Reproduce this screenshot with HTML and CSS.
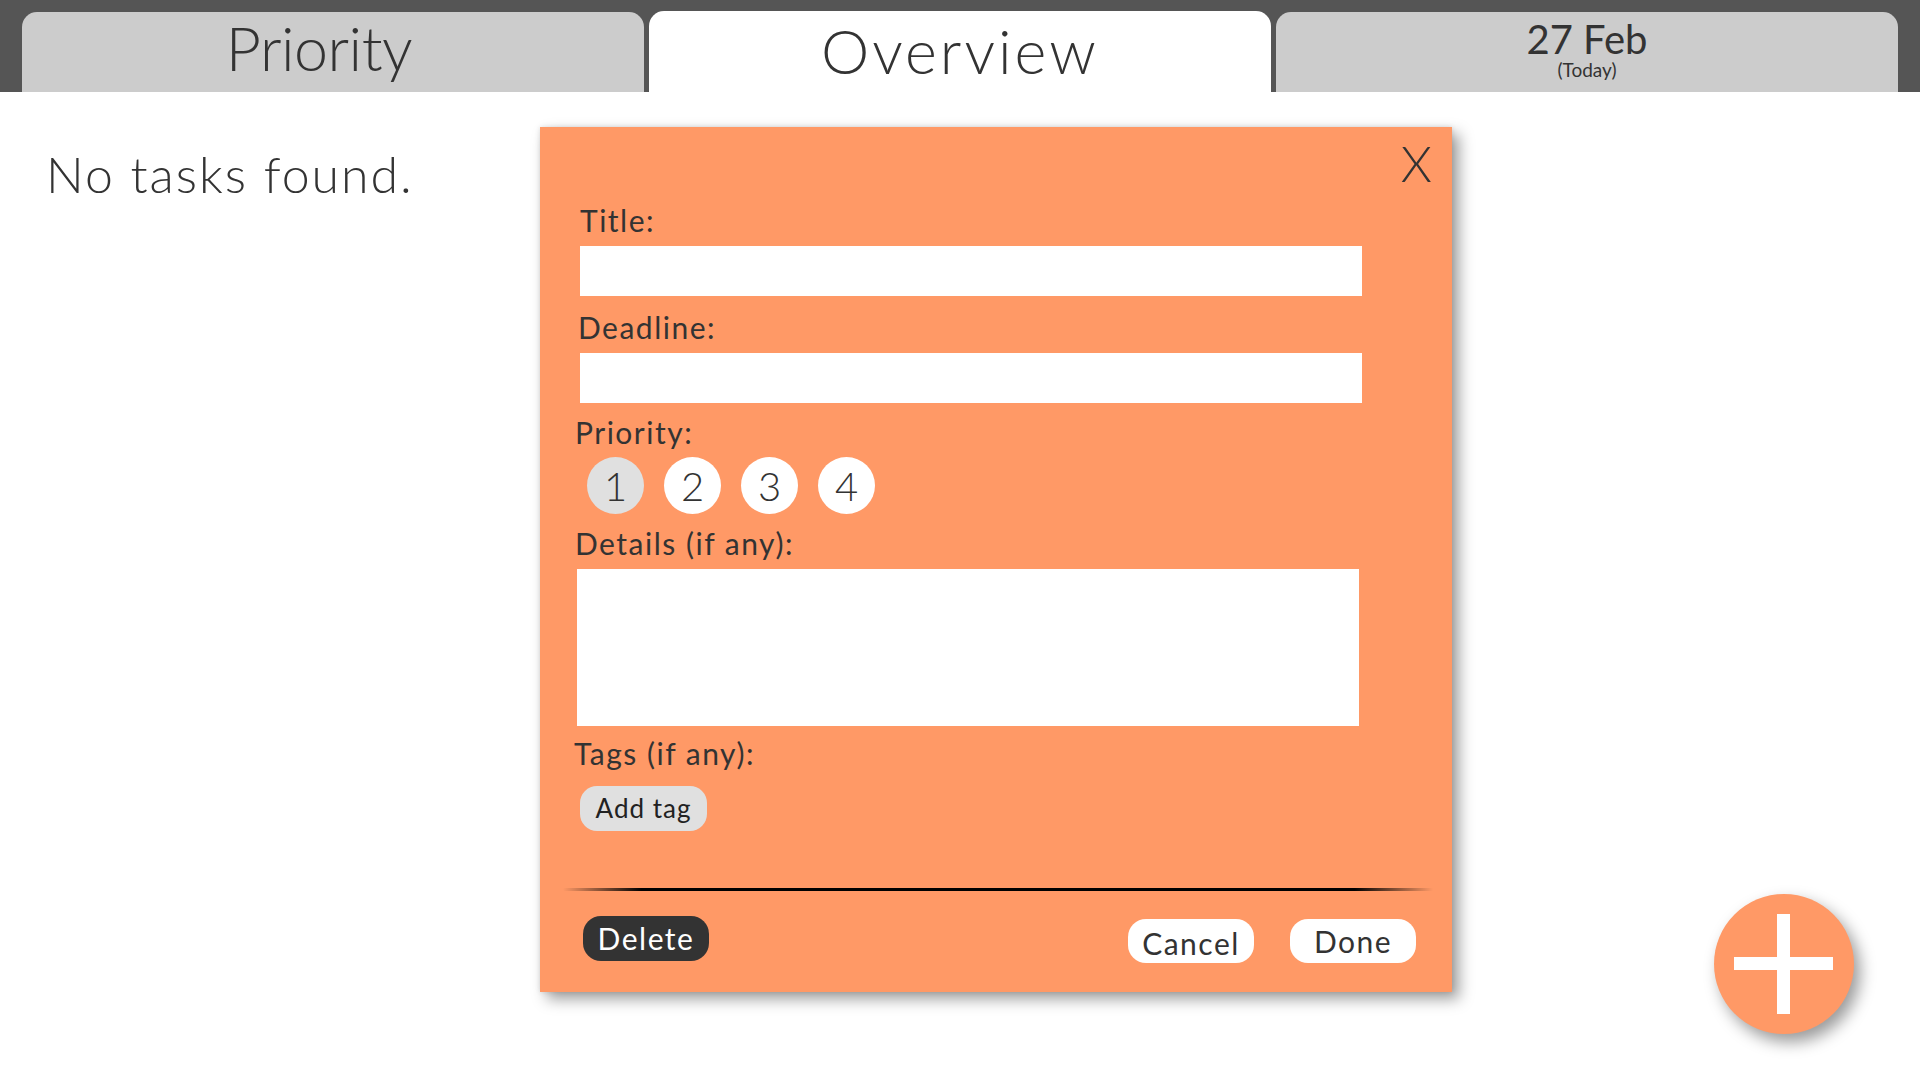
FILE: index.html
```html
<!DOCTYPE html>
<html lang="en">
<head>
<meta charset="utf-8">
<title>Overview</title>
<link rel="stylesheet" href="styles.css">
</head>
<body>
<header class="tabbar">
  <div class="tab tab-priority"><span class="tab-label-shift">Priority</span></div>
  <div class="tab tab-active">Overview</div>
  <div class="tab tab-date">
    <div class="date-main">27 Feb</div>
    <div class="date-sub">(Today)</div>
  </div>
</header>

<main class="content">
  <p class="empty">No tasks found.</p>
</main>

<div class="modal">
  <div class="modal-top"><span class="close">X</span></div>

  <label class="label label-title">Title:</label>
  <input class="text-input" type="text">

  <label class="label label-deadline">Deadline:</label>
  <input class="text-input" type="text">

  <label class="label label-priority">Priority:</label>
  <div class="prio-row">
    <span class="prio prio-selected">1</span>
    <span class="prio">2</span>
    <span class="prio">3</span>
    <span class="prio">4</span>
  </div>

  <label class="label label-details">Details (if any):</label>
  <textarea class="details"></textarea>

  <label class="label label-tags">Tags (if any):</label>
  <button class="add-tag">Add tag</button>

  <div class="divider"></div>

  <div class="modal-footer">
    <button class="btn btn-delete">Delete</button>
    <div class="footer-right">
      <button class="btn btn-light btn-cancel">Cancel</button>
      <button class="btn btn-light">Done</button>
    </div>
  </div>
</div>

<button class="fab" aria-label="Add task">
  <svg width="100" height="100" viewBox="0 0 100 100">
    <rect x="0" y="43" width="99" height="13" fill="#fff"/>
    <rect x="43" y="0" width="13" height="100" fill="#fff"/>
  </svg>
</button>
</body>
</html>
```

FILE: styles.css
```css
html, body {
  margin: 0;
  padding: 0;
  background: #ffffff;
  font-family: "Lato", "Open Sans", "DejaVu Sans", sans-serif;
  font-weight: 300;
  color: #333333;
  width: 1920px;
  height: 1080px;
  overflow: hidden;
}

.tabbar {
  height: 92px;
  background: #555555;
  display: flex;
  align-items: flex-end;
  gap: 5px;
  padding: 0 22px;
  box-sizing: border-box;
}

.tab {
  flex: 1 1 0;
  min-width: 0;
  height: 80px;
  background: #cccccc;
  border-radius: 15px 15px 0 0;
  box-sizing: border-box;
  text-align: center;
  font-size: 61px;
  line-height: 61px;
  color: #333333;
  white-space: nowrap;
}

.tab-priority {
  padding-top: 5px;
  letter-spacing: -0.5px;
}

.tab-label-shift {
  margin-right: 28px;
}

.tab-active {
  background: #ffffff;
  height: 81px;
  padding-top: 9px;
  letter-spacing: 3px;
}

.tab-date {
  padding-top: 6px;
}

.date-main {
  font-size: 40px;
  line-height: 42px;
  font-weight: 400;
}

.date-sub {
  font-size: 19px;
  line-height: 20px;
  font-weight: 400;
}

.content {
  padding: 52px 0 0 46px;
}

.empty {
  margin: 0;
  font-size: 50px;
  line-height: 60px;
  letter-spacing: 2px;
}

.modal {
  position: absolute;
  left: 540px;
  top: 127px;
  width: 912px;
  height: 865px;
  box-sizing: border-box;
  padding: 11px 20px 0 40px;
  background: #ff9966;
  display: flex;
  flex-direction: column;
  align-items: flex-start;
  box-shadow: 7px 7px 14px rgba(0, 0, 0, 0.38), 0 0 5px rgba(0, 0, 0, 0.12);
}

.modal-top {
  align-self: stretch;
  display: flex;
  justify-content: flex-end;
  height: 50px;
}

.close {
  font-size: 50px;
  line-height: 50px;
  font-weight: 300;
  color: #333333;
}

.label {
  display: block;
  font-size: 30px;
  line-height: 30px;
  font-weight: 400;
  letter-spacing: 1.5px;
  color: #333333;
  margin-left: -2px;
}

.label-title { margin-top: 17px; margin-left: 0; }
.label-deadline { margin-top: 16px; }
.label-priority { margin-top: 14px; margin-left: -5px; }
.label-details { margin-top: 14px; margin-left: -5px; }
.label-tags { margin-top: 12px; margin-left: -6px; }

.text-input {
  display: block;
  margin-top: 11px;
  width: 782px;
  height: 50px;
  border: none;
  padding: 0 10px;
  box-sizing: border-box;
  background: #ffffff;
  font-family: inherit;
  font-size: 26px;
  outline: none;
}

.prio-row {
  display: flex;
  gap: 20px;
  margin-top: 10px;
  margin-left: 7px;
}

.prio {
  width: 57px;
  height: 57px;
  border-radius: 50%;
  background: #ffffff;
  display: flex;
  align-items: center;
  justify-content: center;
  font-size: 40px;
  line-height: 40px;
  font-weight: 300;
  color: #333333;
}

.prio-selected {
  background: #e0e0e0;
}

.details {
  display: block;
  margin-top: 11px;
  margin-left: -3px;
  width: 782px;
  height: 157px;
  border: none;
  padding: 8px 10px;
  box-sizing: border-box;
  background: #ffffff;
  resize: none;
  font-family: inherit;
  font-size: 24px;
  outline: none;
}

.add-tag {
  margin-top: 18px;
  width: 127px;
  height: 45px;
  border: none;
  border-radius: 17px;
  background: #e0e0e0;
  font-family: inherit;
  font-weight: 400;
  font-size: 26px;
  letter-spacing: 1px;
  line-height: 45px;
  padding: 0;
  color: #222222;
}

.divider {
  margin-top: 57px;
  margin-left: -17px;
  width: 870px;
  height: 3px;
  background: linear-gradient(to right, rgba(0,0,0,0), #000000 9%, #000000 91%, rgba(0,0,0,0));
}

.modal-footer {
  align-self: stretch;
  margin-top: 25px;
  display: flex;
  justify-content: space-between;
  align-items: flex-start;
  padding: 0 16px 0 3px;
}

.footer-right {
  display: flex;
  gap: 36px;
  margin-top: 3px;
}

.btn {
  width: 126px;
  height: 44px;
  border: none;
  border-radius: 18px;
  padding: 0;
  font-family: inherit;
  font-weight: 400;
  font-size: 30px;
  letter-spacing: 1.5px;
  line-height: 44px;
}

.btn-delete {
  background: #333333;
  color: #ffffff;
  height: 45px;
  padding-bottom: 3px;
}

.btn-light {
  background: #ffffff;
  color: #333333;
}

.btn-cancel {
  padding-top: 2px;
}

.fab {
  position: fixed;
  right: 66px;
  bottom: 46px;
  width: 140px;
  height: 140px;
  border: none;
  border-radius: 50%;
  background: #ff9966;
  padding: 0;
  display: flex;
  align-items: center;
  justify-content: center;
  box-shadow: 6px 8px 16px rgba(0, 0, 0, 0.4);
}

.fab svg {
  display: block;
}
```
